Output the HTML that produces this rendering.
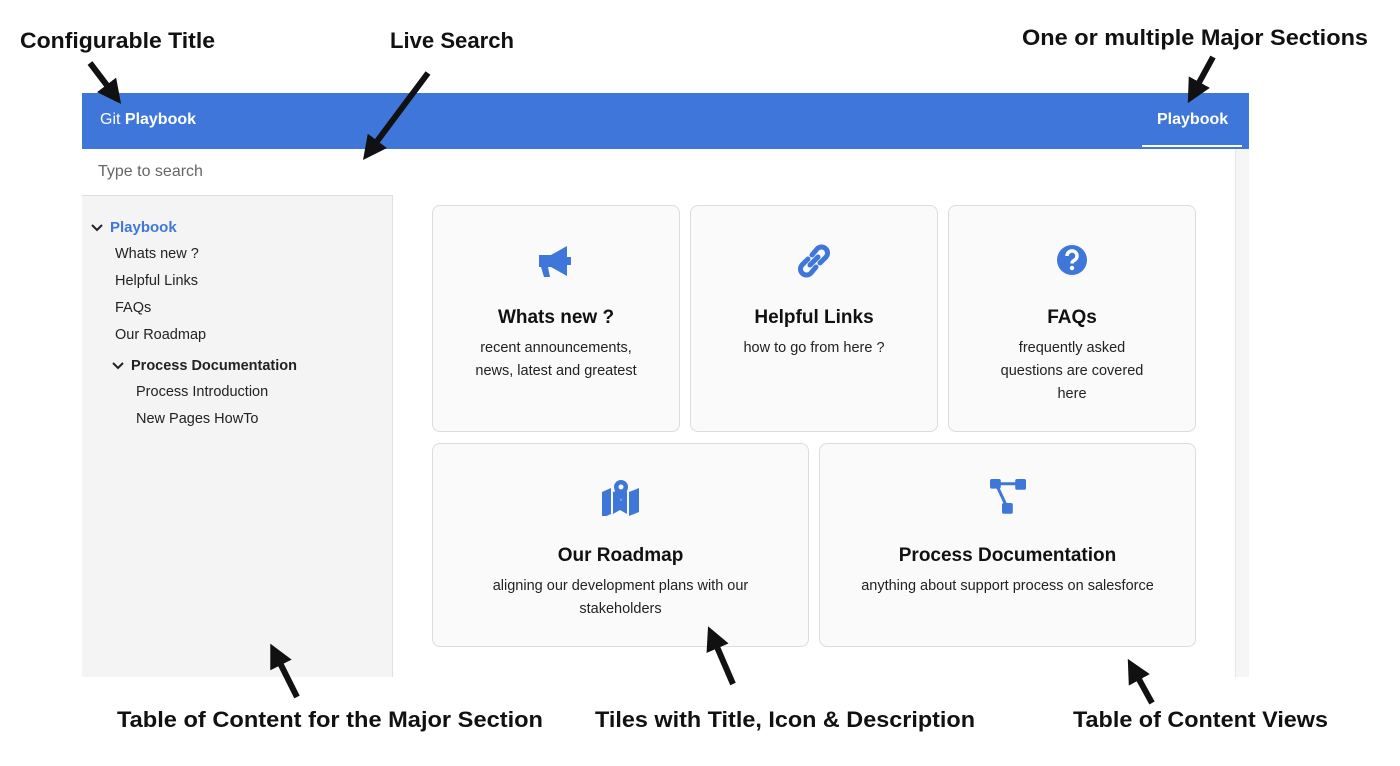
<!DOCTYPE html>
<html><head><meta charset="utf-8"><style>
*{margin:0;padding:0;box-sizing:border-box}
body{width:1400px;height:766px;background:#fff;position:relative;overflow:hidden;font-family:"Liberation Sans",sans-serif}
.abs{position:absolute}
.hdr{left:82px;top:93px;width:1167px;height:56px;background:#3e77d9}
.side{left:82px;top:149px;width:311px;height:528px;background:#f4f4f4;border-right:1px solid #e0e0e0}
.search{left:82px;top:149px;width:311px;height:47px;background:#fff;border-bottom:1px solid #ddd;font-size:16px;color:#666;padding:14px 0 0 16px}
.toc{font-size:14.5px;color:#222;position:absolute}
.tile{position:absolute;background:#fafafa;border:1px solid #dcdcdc;border-radius:8px;text-align:center}
.tile h3{position:absolute;left:0;right:0;font-size:19px;font-weight:bold;color:#111}
.tile p{position:absolute;left:0;right:0;font-size:14.5px;line-height:23px;color:#222}
.tile svg{position:absolute;left:50%;transform:translateX(-50%)}
</style></head><body>
<div class="abs hdr"></div>
<div class="abs" style="left:100px;top:111px;font-size:16px;color:#fff">Git <b>Playbook</b></div>
<div class="abs" style="left:1157px;top:111px;font-size:16px;color:#fff;font-weight:bold">Playbook</div>
<div class="abs" style="left:1142px;top:145px;width:100px;height:2px;background:#fff"></div>
<div class="abs" style="left:1235px;top:149px;width:14px;height:528px;background:#f6f6f6;border-left:1px solid #e6e6e6"></div>
<div class="abs side"></div>
<div class="abs search">Type to search</div>
<svg class="abs" style="left:90px;top:222px" width="14" height="12"><path d="M2 3l5 5 5-5" stroke="#222" stroke-width="2" fill="none"/></svg>
<div class="toc" style="left:110px;top:219px;color:#3e77d9;font-weight:bold;font-size:15px">Playbook</div>
<div class="toc" style="left:115px;top:246px">Whats new ?</div>
<div class="toc" style="left:115px;top:273px">Helpful Links</div>
<div class="toc" style="left:115px;top:300px">FAQs</div>
<div class="toc" style="left:115px;top:327px">Our Roadmap</div>
<svg class="abs" style="left:111px;top:360px" width="14" height="12"><path d="M2 3l5 5 5-5" stroke="#222" stroke-width="2" fill="none"/></svg>
<div class="toc" style="left:131px;top:358px;font-weight:bold">Process Documentation</div>
<div class="toc" style="left:136px;top:384px">Process Introduction</div>
<div class="toc" style="left:136px;top:411px">New Pages HowTo</div>

<div class="tile" style="left:432px;top:205px;width:248px;height:227px">
<svg style="top:38px" width="40" height="36" viewBox="0 0 40 36"><path d="M3 11h12l16-9v30l-16-9h-3l2 10h-6l-3-10h-2z" fill="#3e77d9"/><rect x="31" y="13" width="4" height="8" fill="#3e77d9"/></svg>
<h3 style="top:101px">Whats new ?</h3><p style="top:131px">recent announcements,<br>news, latest and greatest</p></div>
<div class="tile" style="left:690px;top:205px;width:248px;height:227px">
<svg style="top:37px" width="36" height="36" viewBox="0 0 36 36"><g fill="none" stroke="#3e77d9" stroke-width="5" stroke-linecap="round"><path d="M16 12l5-6a6 6 0 0 1 9 8l-6 6"/><path d="M20 24l-5 6a6 6 0 0 1-9-8l6-6"/><path d="M14 22l8-8"/></g></svg>
<h3 style="top:101px">Helpful Links</h3><p style="top:131px">how to go from here ?</p></div>
<div class="tile" style="left:948px;top:205px;width:248px;height:227px">
<svg style="top:38px" width="32" height="32" viewBox="0 0 32 32"><circle cx="16" cy="16" r="15" fill="#3e77d9"/><path d="M11 12a5 5 0 1 1 7 4.5c-1.5.8-2 1.5-2 3" stroke="#fff" stroke-width="3.5" fill="none"/><circle cx="16" cy="24" r="2.2" fill="#fff"/></svg>
<h3 style="top:101px">FAQs</h3><p style="top:131px">frequently asked<br>questions are covered<br>here</p></div>
<div class="tile" style="left:432px;top:443px;width:377px;height:204px">
<svg style="top:36px" width="40" height="36" viewBox="0 0 40 36"><path d="M1 12l9-4v26l-9 4z M28 12l10-4v24l-10 4z" fill="#3e77d9"/><path d="M12 12l3-1 5 10 5-10 1 1v22l-7-4-7 4z" fill="#3e77d9"/><path d="M20 0a7 7 0 0 1 7 7c0 5-7 13-7 13s-7-8-7-13a7 7 0 0 1 7-7z" fill="#3e77d9"/><circle cx="20" cy="7" r="2.5" fill="#fafafa"/></svg>
<h3 style="top:101px">Our Roadmap</h3><p style="top:131px">aligning our development plans with our<br>stakeholders</p></div>
<div class="tile" style="left:819px;top:443px;width:377px;height:204px">
<svg style="top:35px" width="36" height="36" viewBox="0 0 30 30"><rect x="0" y="0" width="9" height="8" rx="1.5" fill="#3e77d9"/><rect x="21" y="0" width="9" height="9" rx="1.5" fill="#3e77d9"/><rect x="10" y="20" width="9" height="9" rx="1.5" fill="#3e77d9"/><path d="M8 4h14M6 6l7 15" stroke="#3e77d9" stroke-width="2.5"/></svg>
<h3 style="top:101px">Process Documentation</h3><p style="top:131px">anything about support process on salesforce</p></div>

<svg class="abs" style="left:0;top:0" width="1400" height="766">
<defs><marker id="a" markerWidth="4" markerHeight="4" refX="1.5" refY="2" orient="auto"><path d="M0 0L4 2L0 4z" fill="#111"/></marker></defs>
<g stroke="#111" stroke-width="6" marker-end="url(#a)">
<line x1="90" y1="63" x2="112" y2="92"/>
<line x1="428" y1="73" x2="372" y2="148"/>
<line x1="1213" y1="57" x2="1195" y2="90"/>
<line x1="297" y1="697" x2="277" y2="657"/>
<line x1="733" y1="684" x2="714" y2="640"/>
<line x1="1152" y1="703" x2="1135" y2="672"/>
</g>
<g font-family="Liberation Sans,sans-serif" font-weight="bold" font-size="22" fill="#111">
<text x="20" y="48" textLength="195" lengthAdjust="spacingAndGlyphs">Configurable Title</text>
<text x="390" y="48" textLength="124" lengthAdjust="spacingAndGlyphs">Live Search</text>
<text x="1022" y="45" textLength="346" lengthAdjust="spacingAndGlyphs">One or multiple Major Sections</text>
<text x="117" y="727" textLength="426" lengthAdjust="spacingAndGlyphs">Table of Content for the Major Section</text>
<text x="595" y="727" textLength="380" lengthAdjust="spacingAndGlyphs">Tiles with Title, Icon &amp; Description</text>
<text x="1073" y="727" textLength="255" lengthAdjust="spacingAndGlyphs">Table of Content Views</text>
</g></svg>
</body></html>
